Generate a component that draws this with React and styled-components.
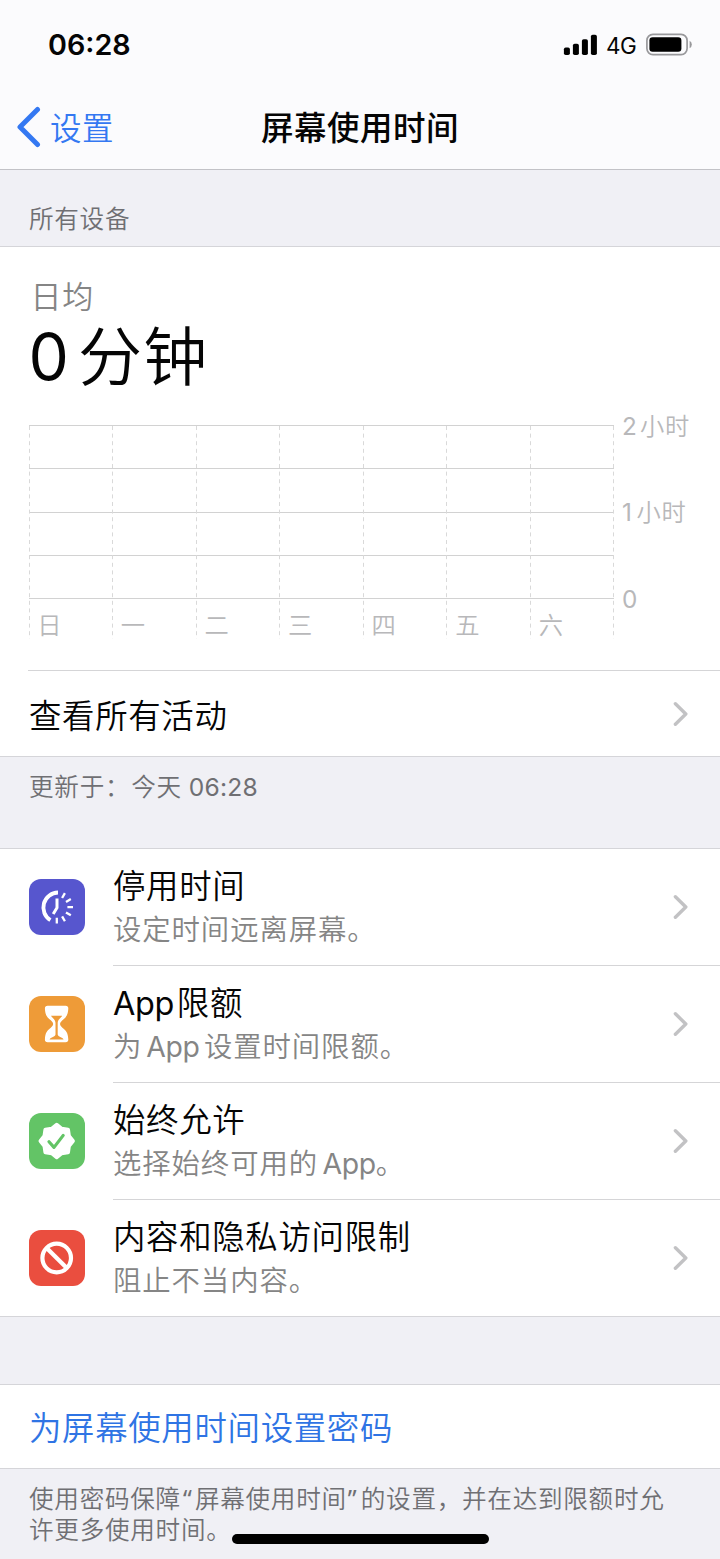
import React from 'react';
import styled, { createGlobalStyle } from 'styled-components';

const Global = createGlobalStyle`
  html, body { margin: 0; padding: 0; background: #f0f0f5; }
  body {
    font-family: Inter, "Noto Sans CJK SC DemiLight", "Noto Sans CJK SC", sans-serif;
    color: #050505;
    -webkit-font-smoothing: antialiased;
  }
  * { box-sizing: border-box; }
  svg { display: block; flex: none; }
`;

const Screen = styled.div`
  position: relative;
  width: 720px;
  height: 1559px;
  overflow: hidden;
  background: #f0f0f5;
  white-space: nowrap;
`;

const Header = styled.header`
  height: 170px;
  background: #fbfbfd;
  border-bottom: 1px solid #c2c2c7;
`;

const StatusBar = styled.div`
  height: 89px;
  padding: 0 27px 0 48px;
  display: flex;
  align-items: center;
  justify-content: space-between;
`;

const Clock = styled.span`
  font-size: 28.7px;
  font-weight: 600;
  line-height: 34px;
  letter-spacing: 0;
`;

const StatusIcons = styled.div`
  display: flex;
  align-items: center;
`;

const Carrier = styled.span`
  width: 30px;
  margin: 2px 9px 0 9px;
  font-size: 22.5px;
  line-height: 28px;
  letter-spacing: -0.5px;
`;

const NavBar = styled.nav`
  height: 76px;
  display: grid;
  grid-template-columns: 1fr auto 1fr;
  align-items: center;
`;

const Back = styled.a`
  display: flex;
  align-items: center;
  gap: 9px;
  padding-left: 16px;
  font-size: 31.5px;
  line-height: 40px;
  color: #3478f2;
`;

const BackText = styled.span`
  padding-top: 3px;
  letter-spacing: 0.4px;
`;

const Title = styled.h1`
  margin: 0;
  padding-top: 3px;
  font-family: Inter, "Noto Sans CJK SC", sans-serif;
  font-size: 32.5px;
  line-height: 40px;
  font-weight: 500;
  letter-spacing: 0.5px;
`;

const SectionLabel = styled.div`
  height: 76px;
  padding: 33px 29px 0;
  font-size: 24.6px;
  line-height: 32px;
  letter-spacing: 0.7px;
  color: #6f6f73;
`;

const Card = styled.section`
  background: #fff;
  border-top: 1px solid #d5d5d9;
  border-bottom: 1px solid #d5d5d9;
`;

const Summary = styled.div`
  height: 423px;
  padding: 30px 0 0 29px;
`;

const AverageLabel = styled.div`
  font-size: 31px;
  line-height: 40px;
  letter-spacing: 0.8px;
  padding-left: 1.5px;
  color: #858585;
`;

const Average = styled.div`
  display: flex;
  align-items: baseline;
  gap: 7.5px;
  height: 80px;
  margin-left: -0.5px;
  font-size: 64px;
  line-height: 80px;
  letter-spacing: 1.5px;
`;

const Chart = styled.svg`
  margin-top: 10px;
  font-size: 24.3px;
  fill: #b8b8ba;
`;

const LinkRow = styled.a`
  display: flex;
  align-items: center;
  justify-content: space-between;
  height: ${(p) => p.$height}px;
  margin-left: ${(p) => (p.$divided ? 28 : 0)}px;
  padding: 0 31px 0 ${(p) => (p.$divided ? 1 : 29)}px;
  border-top: ${(p) => (p.$divided ? '1px solid #d5d5d7' : '0')};
  font-size: 32.4px;
  line-height: 42px;
  letter-spacing: 0.7px;
  color: ${(p) => p.$color || 'inherit'};
`;

const LinkText = styled.span`
  padding-top: ${(p) => p.$drop}px;
`;

const Note = styled.p`
  margin: 0;
  height: ${(p) => p.$height}px;
  padding: ${(p) => p.$top}px 28px 0 29px;
  font-size: 24.6px;
  line-height: 31px;
  letter-spacing: 0.72px;
  color: #6f6f73;
`;

const Quote = styled.span`
  display: inline-block;
  width: 14px;
  padding-left: ${(p) => p.$indent}px;
  font-family: "Noto Sans", sans-serif;
  letter-spacing: 0;
`;

const Today = styled.span`
  margin-left: 1px;
`;

const Time = styled.span`
  margin-left: -0.7px;
  letter-spacing: 0.2px;
`;

const Row = styled.a`
  display: flex;
  height: ${(p) => (p.$last ? 116 : 117)}px;
  padding-left: 29px;
`;

const Tile = styled.svg`
  width: 56px;
  height: 56px;
  margin: 30px 28px 0 0;
  border-radius: 12px;
  background: ${(p) => p.$bg};
`;

const RowBody = styled.div`
  flex: 1;
  display: flex;
  justify-content: space-between;
  padding-right: 31px;
  border-bottom: ${(p) => (p.$last ? '0' : '1px solid #d5d5d7')};
`;

const RowText = styled.div`
  padding-top: 16px;
`;

const Accessory = styled.div`
  padding-top: 45px;
`;

const RowTitle = styled.div`
  font-size: 32.4px;
  line-height: 43px;
  letter-spacing: 0.7px;
`;

const RowDetail = styled.div`
  font-size: 28.4px;
  line-height: 43px;
  letter-spacing: 0.9px;
  color: #858585;
`;

const Latin = styled.span`
  letter-spacing: -0.4px;
  margin: 0 ${(p) => p.$after || 0}px 0 ${(p) => p.$before || 0}px;
`;

const Gap = styled.div`
  height: 67px;
`;

const HomeIndicator = styled.div`
  position: absolute;
  left: 232px;
  top: 1534px;
  width: 257px;
  height: 10px;
  border-radius: 5px;
  background: #000;
`;

const Chevron = () => (
  <svg width="16" height="26" viewBox="0 0 16 26" fill="none" stroke="#c2c2c4" strokeWidth="3.4" strokeLinecap="round" strokeLinejoin="round">
    <path d="M2.4 2.8 L12.8 13 L2.4 23.2" />
  </svg>
);

const Signal = () => (
  <svg width="34" height="22" viewBox="0 0 34 22">
    <rect x="0.9" y="13.4" width="6" height="7.6" rx="1.8" />
    <rect x="9.9" y="9.8" width="6" height="11.2" rx="1.8" />
    <rect x="18.9" y="5.2" width="6" height="15.8" rx="1.8" />
    <rect x="27.9" y="0.8" width="6" height="20.2" rx="1.8" />
  </svg>
);

const Battery = () => (
  <svg width="48" height="24" viewBox="0 0 48 24">
    <rect x="1.9" y="1.4" width="40.2" height="20.2" rx="6" fill="none" stroke="#98989b" strokeWidth="1.7" />
    <rect x="4.4" y="4.3" width="32" height="14.4" rx="3.2" />
    <path d="M44.6 7.7 Q46.8 8.7 46.8 11.5 Q46.8 14.3 44.6 15.3 Z" fill="#98989b" />
  </svg>
);

const TICKS = [-60, -30, 0, 30, 60, 90];

const DowntimeGlyph = () => (
  <g fill="none" stroke="#fff">
    <path d="M29 13.5 A15 15 0 0 0 21.4 41.2" strokeWidth="3.9" />
    <path d="M28 19.4 V28.8 L24.2 35" strokeWidth="3" strokeLinejoin="round" />
    {TICKS.map((a) => (
      <path key={a} d="M38.4 28.2 H44" strokeWidth="2.3" transform={`rotate(${a} 27.8 28.2)`} />
    ))}
  </g>
);

const HourglassGlyph = () => (
  <g>
    <path
      d="M18.6 9.7 H36.6 Q39.4 9.7 39.3 12.6 C39 19.6 36.8 21.6 33.4 24.2 Q31 26.2 31 28 Q31 29.8 33.4 31.8 C36.8 34.4 39 36.4 39.3 43.4 Q39.4 46.3 36.6 46.3 H18.6 Q15.8 46.3 15.9 43.4 C16.2 36.4 18.4 34.4 21.8 31.8 Q24.2 29.8 24.2 28 Q24.2 26.2 21.8 24.2 C18.4 21.6 16.2 19.6 15.9 12.6 Q15.8 9.7 18.6 9.7 Z"
      fill="#fff"
    />
    <path
      d="M22 19.8 H33.2 C31.8 22.2 28.8 23.4 28.7 27 V38.6 C29 41.2 33.4 41.2 34.6 43.4 H20.6 C21.8 41.2 26.2 41.2 26.5 38.6 V27 C26.4 23.4 23.4 22.2 22 19.8 Z"
      fill="#ee9b38"
    />
  </g>
);

const SealGlyph = () => (
  <g>
    <path
      d="M27.7 11.8 L32.6 15.8 L39 16.7 L39.9 23.1 L43.9 28 L39.9 32.9 L39 39.3 L32.6 40.2 L27.7 44.2 L22.8 40.2 L16.4 39.3 L15.5 32.9 L11.5 28 L15.5 23.1 L16.4 16.7 L22.8 15.8 Z"
      fill="#fff"
      stroke="#fff"
      strokeWidth="4"
      strokeLinejoin="round"
    />
    <path d="M20 28.8 L25 34.4 L34.2 22.4" fill="none" stroke="#63c466" strokeWidth="3.2" strokeLinecap="round" strokeLinejoin="round" />
  </g>
);

const BlockGlyph = () => (
  <g fill="none" stroke="#fff" strokeWidth="4.2">
    <circle cx="27.7" cy="28" r="14.3" />
    <path d="M17.6 17.9 L37.8 38.1" />
  </g>
);

const DAYS = ['日', '一', '二', '三', '四', '五', '六'];
const COLUMN = 83.57;

const UsageChart = () => (
  <Chart width="691" height="240" viewBox="29 407 691 240">
    {[425.5, 468.5, 512.5, 555.5, 598.5].map((y) => (
      <path key={y} d={`M29 ${y} H614`} stroke="#d2d2d2" />
    ))}
    {[0, 1, 2, 3, 4, 5, 6, 7].map((i) => (
      <path
        key={i}
        d={`M${Math.floor(29 + i * COLUMN) + 0.5} 426 V639`}
        stroke="#d9d9d9"
        strokeDasharray="4 3.6"
      />
    ))}
    {DAYS.map((d, i) => (
      <text key={d} x={37.3 + i * COLUMN} y="634">{d}</text>
    ))}
    <text y="434.5"><tspan x="622">2</tspan><tspan x="640" letterSpacing="0.7">小时</tspan></text>
    <text y="521"><tspan x="622">1</tspan><tspan x="636.5" letterSpacing="0.7">小时</tspan></text>
    <text x="622" y="607.5">0</text>
  </Chart>
);

const ITEMS = [
  { bg: '#5756ce', Glyph: DowntimeGlyph, title: '停用时间', detail: '设定时间远离屏幕。' },
  { bg: '#ee9b38', Glyph: HourglassGlyph, title: <><Latin $after={3}>App</Latin>限额</>, detail: <>为<Latin $before={4} $after={4.5}>App</Latin>设置时间限额。</> },
  { bg: '#63c466', Glyph: SealGlyph, title: '始终允许', detail: <>选择始终可用的<Latin $before={4.5}>App</Latin>。</> },
  { bg: '#ea4e3f', Glyph: BlockGlyph, title: '内容和隐私访问限制', detail: '阻止不当内容。' },
];

export default function App() {
  return (
    <Screen lang="zh-CN">
      <Global />
      <Header>
        <StatusBar>
          <Clock>06:28</Clock>
          <StatusIcons>
            <Signal />
            <Carrier>4G</Carrier>
            <Battery />
          </StatusIcons>
        </StatusBar>
        <NavBar>
          <Back>
            <svg width="25" height="42" viewBox="0 0 25 42" fill="none" stroke="#3478f2" strokeWidth="5" strokeLinecap="round" strokeLinejoin="round">
              <path d="M21.5 3.5 L4 21 L21.5 38.5" />
            </svg>
            <BackText>设置</BackText>
          </Back>
          <Title>屏幕使用时间</Title>
        </NavBar>
      </Header>

      <SectionLabel>所有设备</SectionLabel>
      <Card>
        <Summary>
          <AverageLabel>日均</AverageLabel>
          <Average><span>0</span><span>分钟</span></Average>
          <UsageChart />
        </Summary>
        <LinkRow $height={86} $divided><LinkText $drop={6}>查看所有活动</LinkText><Chevron /></LinkRow>
      </Card>
      <Note $height={91} $top={15}>更新于：<Today>今天</Today> <Time>06:28</Time></Note>

      <Card>
        {ITEMS.map(({ bg, Glyph, title, detail }, i) => {
          const last = i === ITEMS.length - 1;
          return (
            <Row key={bg} $last={last}>
              <Tile viewBox="0 0 56 56" $bg={bg}><Glyph /></Tile>
              <RowBody $last={last}>
                <RowText>
                  <RowTitle>{title}</RowTitle>
                  <RowDetail>{detail}</RowDetail>
                </RowText>
                <Accessory><Chevron /></Accessory>
              </RowBody>
            </Row>
          );
        })}
      </Card>
      <Gap />
      <Card>
        <LinkRow $height={83} $color="#2f74e4"><LinkText $drop={5}>为屏幕使用时间设置密码</LinkText></LinkRow>
      </Card>
      <Note $top={14}>
        使用密码保障<Quote $indent={2}>“</Quote>屏幕使用时间<Quote $indent={1}>”</Quote>的设置，并在达到限额时允<br />许更多使用时间。
      </Note>
      <HomeIndicator />
    </Screen>
  );
}
